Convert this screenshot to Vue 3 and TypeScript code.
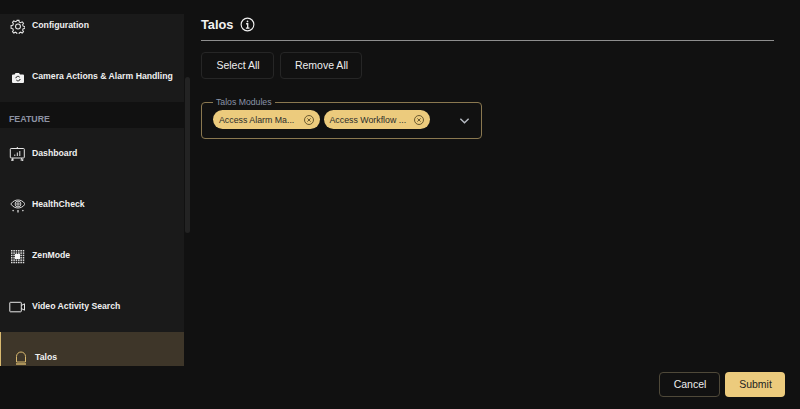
<script setup lang="ts">
const items = [
  { label: 'Dashboard', icon: 'dash' },
  { label: 'HealthCheck', icon: 'eye' },
  { label: 'ZenMode', icon: 'zen' },
  { label: 'Video Activity Search', icon: 'video' },
]
const zenDots: number[][] = []
for (let r = 0; r < 6; r++) {
  for (let c = 0; c < 6; c++) {
    const inner = r >= 2 && r <= 3 && c >= 2 && c <= 3
    if (!inner) zenDots.push([2 + c * 2.35, 2 + r * 2.35])
  }
}
</script>

<template>
  <div class="page">
    <aside class="side">
      <div class="side-scroll">
        <div class="list">
          <div class="item">
            <svg class="ic" viewBox="0 0 16 16" fill="none" stroke="#e8e8e8" stroke-width="1.200">
              <g transform="translate(2 1.500) scale(.875)">
                <circle cx="8" cy="8" r="2.800" />
                <path d="M6.900 1h2.200l.4 2 1.500.7 1.800-1 1.500 1.600-1 1.700.6 1.600 2 .4v2.200l-2 .4-.6 1.600 1 1.700-1.500 1.600-1.800-1-1.500.7-.4 2H6.900l-.4-2-1.500-.7-1.800 1-1.500-1.600 1-1.700-.6-1.600-2-.4V6.900l2-.4.6-1.600-1-1.700 1.500-1.600 1.800 1 1.500-.7z" />
              </g>
            </svg>
            <span>Configuration</span>
          </div>
          <div class="item">
            <svg class="ic" viewBox="0 0 16 16">
              <path fill="#f2f2f2" d="M4 5.500h1.500l1-1.500h3.500l1 1.500H14a1 1 0 0 1 1 1V13a1 1 0 0 1-1 1H4a1 1 0 0 1-1-1V6.500a1 1 0 0 1 1-1z" />
              <path fill="none" stroke="#1a1a1a" stroke-width="1" d="M6.800 9.200a2.200 2.200 0 0 1 3.900-1M11.200 10a2.200 2.200 0 0 1-3.900 1" />
            </svg>
            <span>Camera Actions &amp; Alarm Handling</span>
          </div>
          <div class="section">FEATURE</div>
          <div v-for="it in items" :key="it.label" class="item">
            <svg v-if="it.icon === 'dash'" class="ic" viewBox="0 0 16 16" fill="none" stroke="#e8e8e8" stroke-width="1">
              <rect x="1.300" y="2.500" width="14" height="9.500" rx=".8" />
              <path d="M8.300 1v1.500M4 12l-1 3M12.500 12l1 3M2 14h3M11.500 14h3M5.800 10V8.500M8.300 10V6.500M10.800 10V5" />
            </svg>
            <svg v-else-if="it.icon === 'eye'" class="ic" viewBox="0 0 16 16" fill="none" stroke="#e8e8e8" stroke-width=".9">
              <g transform="translate(1 1)">
                <path d="M.8 6C3 3 5.500 2 8 2s5 1 7.200 4C13 9 10.500 10 8 10S3 9 .8 6z" />
                <circle cx="8" cy="6" r="2.900" />
                <circle cx="8" cy="6" r="1.200" />
                <path stroke-width="1.200" d="M8 12v2.500M3.500 12l-.8 1.200M12.500 12l.8 1.200" />
              </g>
            </svg>
            <svg v-else-if="it.icon === 'zen'" class="ic" viewBox="0 0 16 16">
              <rect v-for="(d, i) in zenDots" :key="i" :x="d[0]" :y="d[1]" width="1.500" height="1.500" fill="#e0e0e0" />
              <rect x="6" y="6" width="5" height="5" fill="#f6f6f6" />
            </svg>
            <svg v-else class="ic" viewBox="0 0 16 16" fill="none" stroke="#e8e8e8" stroke-width="1">
              <rect x=".8" y="3.300" width="11.500" height="9.500" rx=".6" />
              <path d="M12.300 6.500l3.200-1.700v6.400L12.300 9.500" />
            </svg>
            <span>{{ it.label }}</span>
          </div>
          <div class="item active">
            <svg class="ic talos" viewBox="0 0 12 16" fill="none" stroke="#d9b96f" stroke-width="1">
              <path d="M1.500 12V6.500a4.500 4.500 0 0 1 9 0V12z" />
              <path d="M1 14h10" stroke-width="1.400" />
            </svg>
            <span>Talos</span>
          </div>
        </div>
      </div>
      <div class="track"><div class="thumb"></div></div>
    </aside>

    <main class="main">
      <header class="head">
        <h1>Talos</h1>
        <svg class="info" viewBox="0 0 16 16" fill="none" stroke="#f0f0f0">
          <circle cx="8" cy="8" r="6.800" stroke-width="1.200" />
          <path stroke-width="1.400" d="M6.500 7.200H8.200V11.800M6.300 11.800h3.800" />
          <circle cx="8" cy="4.700" r=".9" fill="#f0f0f0" stroke="none" />
        </svg>
      </header>

      <div class="actions">
        <button class="btn ghost sel">Select All</button>
        <button class="btn ghost rem">Remove All</button>
      </div>

      <fieldset class="field">
        <legend>Talos Modules</legend>
        <div class="chips">
          <span class="chip">
            <span class="chip-text">Access Alarm Ma...</span>
            <svg class="x" viewBox="0 0 12 12" fill="none" stroke="#6b5a30">
              <circle cx="6" cy="6" r="4.500" />
              <path d="M4.400 4.400l3.200 3.200M7.600 4.400l-3.200 3.200" />
            </svg>
          </span>
          <span class="chip">
            <span class="chip-text">Access Workflow ...</span>
            <svg class="x" viewBox="0 0 12 12" fill="none" stroke="#6b5a30">
              <circle cx="6" cy="6" r="4.500" />
              <path d="M4.400 4.400l3.200 3.200M7.600 4.400l-3.200 3.200" />
            </svg>
          </span>
        </div>
        <svg class="chev" viewBox="0 0 12 8" fill="none" stroke="#b8bcc4" stroke-width="1.500">
          <path d="M1.500 1.500L6 6l4.500-4.500" />
        </svg>
      </fieldset>

      <footer class="foot">
        <button class="btn cancel">Cancel</button>
        <button class="btn submit">Submit</button>
      </footer>
    </main>
  </div>
</template>

<style scoped>
.page {
  width: 800px;
  height: 409px;
  background: #111111;
  display: flex;
  overflow: hidden;
  font-family: "Liberation Sans", Arial, sans-serif;
  color: #f0f0f0;
}
.side {
  width: 191px;
  flex: none;
  display: flex;
  padding-top: 14px;
  height: 366px;
  box-sizing: border-box;
}
.side-scroll {
  width: 184px;
  height: 352px;
  overflow: hidden;
}
.list {
  margin-top: -14px;
}
.track {
  width: 7px;
  padding-top: 63px;
}
.thumb {
  margin-left: 1px;
  width: 5px;
  height: 156px;
  border-radius: 3px;
  background: #232323;
}
.item {
  height: 51px;
  background: #1a1a1a;
  display: flex;
  align-items: center;
  padding-left: 9px;
  font-size: 8.700px;
  font-weight: 700;
  color: #f0f0f0;
  box-sizing: border-box;
}
.item span {
  margin-bottom: 2px;
}
.ic {
  width: 16px;
  height: 16px;
  flex: none;
  margin-right: 7px;
}
.section {
  height: 26px;
  box-sizing: border-box;
  padding: 9px 0 0 9px;
  line-height: 17px;
  font-size: 8.800px;
  font-weight: 700;
  color: #8d93a3;
}
.active {
  background: #3e3629;
  border-left: 1px solid #d9b96f;
  padding-left: 14px;
}
.active .talos {
  width: 12px;
  margin-right: 8px;
}
.main {
  flex: 1;
  min-width: 0;
  position: relative;
  padding-left: 10px;
}
.head {
  margin-right: 26px;
  padding-top: 15px;
  height: 25px;
  border-bottom: 1px solid #8e8e8e;
  display: flex;
  align-items: flex-start;
  gap: 7px;
}
h1 {
  margin: 0;
  font-size: 12.800px;
  line-height: 20px;
  font-weight: 700;
  color: #f2f2f2;
}
.info {
  width: 15px;
  height: 15px;
  margin-top: 2px;
}
.actions {
  display: flex;
  gap: 6px;
  margin-top: 11px;
}
.btn {
  font-family: inherit;
  font-size: 10.500px;
  border-radius: 4px;
  height: 27px;
  padding: 0 0 2px 1px;
  box-sizing: border-box;
  cursor: pointer;
}
.ghost {
  background: #111111;
  border: 1px solid #262626;
  color: #eeeeee;
}
.sel { width: 73px; }
.rem { width: 82px; }
.field {
  position: relative;
  margin: 17px 0 0;
  width: 281px;
  height: 43px;
  box-sizing: border-box;
  border: 1px solid #8a7850;
  border-radius: 4px;
  padding: 0 11px;
  min-width: 0;
}
legend {
  font-size: 8.700px;
  line-height: 12px;
  color: #8a93a8;
  padding: 0 3px;
  margin-left: 0;
}
.chips {
  display: flex;
  gap: 4px;
  margin-top: 2px;
}
.chip {
  height: 19px;
  background: #eccb7d;
  border-radius: 10px;
  display: inline-flex;
  align-items: center;
  justify-content: space-between;
  padding: 0 5px 0 6px;
  width: 106.500px;
  box-sizing: border-box;
  color: #2b2b2b;
  font-size: 8.800px;
}
.x {
  width: 12px;
  height: 12px;
}
.chev {
  position: absolute;
  right: 11px;
  top: 9px;
  width: 11px;
  height: 8px;
}
.foot {
  position: absolute;
  right: 15px;
  top: 372px;
  display: flex;
  gap: 5px;
}
.foot .btn { height: 25px; }
.cancel {
  width: 61px;
  background: #111111;
  border: 1px solid #4f4939;
  color: #eeeeee;
}
.submit {
  width: 60px;
  background: #eccb7d;
  border: none;
  color: #222222;
}
</style>
